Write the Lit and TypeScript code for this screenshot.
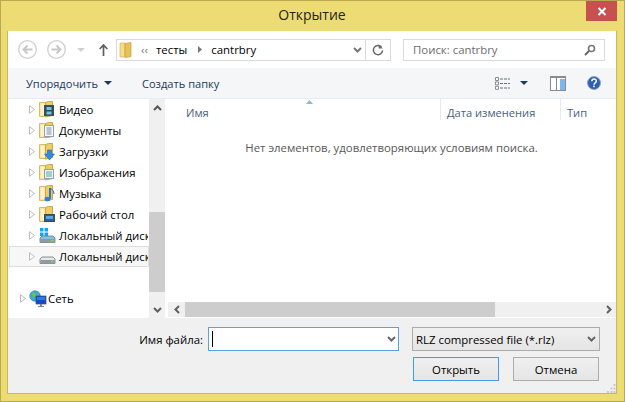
import { LitElement, html, css, svg } from "lit";
import { customElement } from "lit/decorators.js";

const folderBase = svg`
  <path d="M.5 1.500h6v14h-6z" fill="#f9e6a6" stroke="#d8bb6c"/>
  <path d="M6.500 1.500l3-1h4v14l-7 1.500z" fill="#efcc68" stroke="#c9a650"/>
  <path d="M2 3h3.500v11H2z" fill="#fdf2c8"/>`;

const overlays: Record<string, unknown> = {
  video: svg`<rect x="5.500" y="4.500" width="9" height="10" fill="#2e4a60" stroke="#3c4f60"/><path d="M7.500 6h5v3h-5zM7.500 10.500h5v3h-5z" fill="#7cc0e0"/>`,
  docs: svg`<rect x="5.500" y="3.500" width="9" height="11" fill="#f7f9fb" stroke="#8fa0b0"/><path d="M7.500 6h5M7.500 8h5M7.500 10h5M7.500 12h5" stroke="#7b8fa5"/>`,
  down: svg`<path d="M8.500 7h4v4h3l-5 6-5-6h3z" fill="#2f8be0" stroke="#1c65b5" stroke-width=".6"/>`,
  pics: svg`<rect x="5.500" y="5.500" width="9" height="9" fill="#eef3f6" stroke="#8fa0b0"/><rect x="7" y="7" width="6" height="6" fill="#a5cfc0"/>`,
  music: svg`<path d="M11 3v11" stroke="#1e6fc0" stroke-width="1.800"/><path d="M11 3c2 1 4 3 4 6" stroke="#1e6fc0" fill="none"/><ellipse cx="8.500" cy="14" rx="3" ry="2.200" fill="#2a83d6"/>`,
  desk: svg`<rect x="5.500" y="8.500" width="10" height="7" fill="#2b5d8e" stroke="#3a4a5a"/><path d="M7 10h7v3H7z" fill="#58a7e0"/>`,
};

const folder = (k: string) => html`<svg class="ico" width="17" height="17" viewBox="0 0 17 17">${folderBase}${overlays[k]}</svg>`;

const drive = (win: boolean) => html`<svg class="ico" width="17" height="17" viewBox="0 0 17 17">
  ${win ? svg`<path d="M1 1h3.500v3.500H1zM5.500 1H9v3.500H5.500zM1 5.500h3.500V9H1zM5.500 5.500H9V9H5.500z" fill="#12a5ee"/>` : ""}
  <path d="M1 11l2-2h11l2 2v4.500H1z" fill="${win ? "#7fc4e6" : "#e6e8ea"}" stroke="#6e7680" stroke-width=".8"/>
  <rect x="1.400" y="12" width="14.400" height="3.400" fill="#8f9aa3"/>
  <rect x="12" y="13" width="2.500" height="1.400" fill="#7ee03f"/></svg>`;

const net = html`<svg class="ico" width="18" height="18" viewBox="0 0 18 18">
  <circle cx="6" cy="6" r="5.300" fill="#3fa8d8" stroke="#2c7a9c" stroke-width=".6"/>
  <path d="M3 3c2-1 3 0 4 1s-1 3-2 3-2-2-2-4zM7 8c1 0 2 1 1.500 2.500L7 11z" fill="#6cc24a"/>
  <rect x="7" y="6" width="10" height="8" fill="#1649c8" stroke="#44505c" stroke-width=".7"/>
  <rect x="8" y="7" width="8" height="3" fill="#2f78ea"/>
  <path d="M11 14h2v2h2v1H9v-1h2z" fill="#7a8794"/></svg>`;

const tri = html`<svg class="tri" width="6" height="9" viewBox="0 0 6 9"><path d="M.5.7l5 3.800-5 3.800z" fill="#fff" stroke="#bdbdbd"/></svg>`;

const chevDown = (c = "#666") => html`<svg width="9" height="6" viewBox="0 0 9 6"><path d="M1 1l3.500 3.500L8 1" fill="none" stroke="${c}" stroke-width="2"/></svg>`;
const caret = (c = "#1e395b") => html`<svg width="8" height="4" viewBox="0 0 8 4"><path d="M0 0h8L4 4z" fill="${c}"/></svg>`;

const circleArrow = (flip: boolean) => html`<svg width="19" height="19" viewBox="0 0 19 19">
  <circle cx="9.500" cy="9.500" r="8.800" fill="#fff" stroke="#d0d0d0" stroke-width="1.300"/>
  <path d="${flip ? "M4.500 9.500h9M9.500 5.500l4 4-4 4" : "M14.500 9.500h-9M9.500 5.500l-4 4 4 4"}" fill="none" stroke="#c8c8c8" stroke-width="2"/></svg>`;

interface Row { t: string; i: unknown; sel?: boolean }
const rows: Row[] = [
  { t: "Видео", i: folder("video") },
  { t: "Документы", i: folder("docs") },
  { t: "Загрузки", i: folder("down") },
  { t: "Изображения", i: folder("pics") },
  { t: "Музыка", i: folder("music") },
  { t: "Рабочий стол", i: folder("desk") },
  { t: "Локальный диск", i: drive(true) },
  { t: "Локальный диск", i: drive(false), sel: true },
];

@customElement("app-root")
export class AppRoot extends LitElement {
  static styles = css`
    :host { display: block; width: 625px; height: 402px; overflow: hidden; font-family: "Open Sans", "Noto Sans", sans-serif; font-size: 11.4px; color: #000; }
    * { box-sizing: border-box; }
    .win { width: 625px; height: 402px; border: 1px solid #b9a94f; background: #eddc74; padding: 0 7px 7px 6px; display: flex; flex-direction: column; }
    .title { height: 30px; flex: none; display: grid; grid-template-columns: 1fr auto 1fr; align-items: start; }
    .title h1 { margin: 0; font-weight: 400; font-size: 14px; line-height: 22px; padding-top: 3px; color: #222; grid-column: 2; }
    .close { justify-self: end; width: 31px; height: 20px; background: #c75050; display: flex; align-items: center; justify-content: center; }
    .inner { flex: 1; display: flex; flex-direction: column; background: #f0f0f0; border: 1px solid #c9b95c; border-width: 0 1px 1px 1px; min-height: 0; }
    .nav { height: 37px; flex: none; background: #fff; display: flex; align-items: center; padding-left: 10px; }
    .nav .fwd { margin-left: 10px; display: flex; }
    .nav .hist { margin-left: 11px; display: flex; }
    .nav .up { margin-left: 14px; }
    .addr { margin-left: 8px; width: 275px; height: 22px; border: 1px solid #d9d9d9; display: flex; align-items: center; }
    .addr .f { margin-left: 2px; flex: none; }
    .addr .lq { margin-left: 9px; color: #777; width: 15px; }
    .addr .sep { margin: 0 9px 0 11px; flex: none; }
    .addr .dd { margin-left: auto; display: flex; margin-right: 3px; }
    .addr .ref { width: 25px; height: 20px; border-left: 1px solid #d9d9d9; display: flex; align-items: center; justify-content: center; }
    .search { margin-left: 12px; width: 202px; height: 22px; border: 1px solid #d9d9d9; display: flex; align-items: center; padding: 0 8px 0 9px; color: #6d6d6d; justify-content: space-between; }
    .tools { height: 31px; flex: none; background: #f5f6f7; border-bottom: 1px solid #e8ecf0; display: flex; align-items: center; padding-left: 18px; color: #1e395b; font-size: 11.1px; }
    .tools .org { display: flex; align-items: center; gap: 6px; }
    .tools .new { margin-left: 30px; }
    .tools .right { margin-left: auto; display: flex; align-items: center; }
    .tools .views { display: flex; align-items: center; gap: 10px; margin-right: 22px; }
    .tools .pane { margin-right: 21px; }
    .tools .help { margin-right: 15px; display: flex; }
    .body { height: 219px; flex: none; display: grid; grid-template-columns: 141px 16px 1fr; background: #fff; }
    .tree { overflow: hidden; min-width: 0; display: flex; flex-direction: column; }
    .row { height: 21px; flex: none; display: flex; align-items: center; padding-left: 20px; white-space: nowrap; overflow: hidden; border: 1px solid transparent; color: #000; }
    .row.sel { background: #f7f7f7; border-color: #dedede; margin-left: 1px; padding-left: 19px; }
    .row .tri { flex: none; }
    .row .ico { flex: none; margin-left: 4px; margin-right: 3px; }
    .row.net { margin-top: 21px; padding-left: 11px; }
    .row.net .ico { margin-left: 3px; margin-right: 1px; }
    .vbar { background: #f0f0f0; display: flex; flex-direction: column; }
    .vbar .btn { height: 16px; flex: none; display: flex; align-items: center; justify-content: center; }
    .vbar .top { height: 113px; }
    .vbar .thumb { height: 80px; flex: none; background: #cdcdcd; }
    .vbar .rest { flex: 1; }
    .vbar .up { height: 18px; }
    .main { display: flex; flex-direction: column; min-width: 0; }
    .cols { height: 21px; flex: none; display: grid; grid-template-columns: 275px 120px 1fr; color: #4c607a; font-size: 11.1px; }
    .col { display: flex; align-items: center; padding: 6px 0 0 6px; position: relative; border-left: 1px solid #e5e8ec; }
    .col:first-child { border-left: 0; padding-left: 21px; }
    .col .sort { position: absolute; left: 141px; top: 1px; }
    .empty { flex: 1; text-align: center; padding: 19px 0 0 2px; color: #575757; line-height: 17px; }
    .hbar { height: 15px; flex: none; margin: 0 0 1px 3px; background: #f0f0f0; display: flex; align-items: center; }
    .hbar .btn { width: 17px; height: 15px; flex: none; display: flex; align-items: center; justify-content: center; }
    .hbar .btn.r { padding-left: 2px; }
    .hbar .thumb { width: 310px; height: 15px; background: #cdcdcd; flex: none; }
    .hbar .rest { flex: 1; }
    .foot { flex: 1; position: relative; display: grid; grid-template-columns: 200px 191px 201px; grid-template-rows: 24px 24px; row-gap: 6px; padding-top: 9px; align-content: start; }
    .foot label { justify-self: end; align-self: center; margin-right: 5px; }
    .input { border: 1px solid #5b9fe6; background: #fff; display: flex; align-items: center; justify-content: space-between; padding: 0 2px 0 3px; }
    .cursor { width: 1px; height: 16px; background: #000; }
    .select { margin-left: 13px; border: 1px solid #acacac; background: linear-gradient(#f0f0f0, #e5e5e5); display: flex; align-items: center; justify-content: space-between; padding: 0 3px 0 3px; white-space: nowrap; }
    .btns { grid-column: 3; margin-left: 13px; display: flex; justify-content: space-between; padding: 0 1px; }
    .b { width: 86px; height: 24px; display: flex; align-items: center; justify-content: center; border: 1px solid #acacac; background: linear-gradient(#f0f0f0, #e5e5e5); }
    .b.def { border-color: #3c9cee; }
    .grip { position: absolute; right: 0; bottom: 0; }
  `;

  render() {
    return html`<div class="win">
      <div class="title"><h1>Открытие</h1>
        <div class="close"><svg width="10" height="9" viewBox="0 0 10 9"><path d="M1.500 1l7 7M8.500 1l-7 7" stroke="#fff" stroke-width="2"/></svg></div>
      </div>
      <div class="inner">
        <div class="nav">
          ${circleArrow(false)}<span class="fwd">${circleArrow(true)}</span>
          <span class="hist">${caret("#d0d0d0")}</span>
          <svg class="up" width="9" height="12" viewBox="0 0 9 12"><path d="M4.500 12V1M.7 5l3.800-4 3.800 4" fill="none" stroke="#5e5e5e" stroke-width="1.700"/></svg>
          <div class="addr">
            <svg class="f" width="13" height="16" viewBox="0 0 13 16"><path d="M1 1h5v14H1z" fill="#f6dc82" stroke="#d3b45f" stroke-width=".7"/><path d="M6 1.500L12 .5v14l-6 1z" fill="#e9c155" stroke="#c49b3f" stroke-width=".7"/></svg>
            <span class="lq">‹‹</span><span>тесты</span>
            <svg class="sep" width="4" height="7" viewBox="0 0 4 7"><path d="M0 0l4 3.500L0 7z" fill="#777"/></svg>
            <span>cantrbry</span>
            <span class="dd">${chevDown("#777")}</span>
            <span class="ref"><svg width="12" height="12" viewBox="0 0 12 12"><path d="M9.600 3.200A4.600 4.600 0 1 0 10.600 6.400" fill="none" stroke="#6a6a6a" stroke-width="1.500"/><path d="M6.600 .2v4.400h4.200z" fill="#6a6a6a"/></svg></span>
          </div>
          <div class="search"><span>Поиск: cantrbry</span>
            <svg width="12" height="12" viewBox="0 0 12 12"><circle cx="7.500" cy="4.500" r="3" fill="none" stroke="#777" stroke-width="1.600"/><path d="M5 7l-4 4" stroke="#666" stroke-width="2"/></svg>
          </div>
        </div>
        <div class="tools">
          <span class="org">Упорядочить ${caret()}</span>
          <span class="new">Создать папку</span>
          <div class="right">
            <span class="views">
              <svg width="15" height="13" viewBox="0 0 15 13"><path d="M.5.5h3v3h-3zM.5 4.900h3v3h-3zM.5 9.300h3v3h-3z" fill="#fff" stroke="#8a8a8a"/><path d="M5 2h10M5 6.500h10M5 11h10" stroke="#62707f" stroke-dasharray="3 1"/></svg>
              ${caret()}
            </span>
            <svg class="pane" width="16" height="15" viewBox="0 0 16 15"><rect x=".5" y=".5" width="15" height="14" fill="#fff" stroke="#8a8a8a"/><path d="M1 1.500h14" stroke="#8a8a8a"/><path d="M6.500 2v12" stroke="#8a8a8a"/><rect x="10" y="3" width="5" height="11" fill="#7cb8ee"/></svg>
            <span class="help"><svg width="14" height="14" viewBox="0 0 14 14"><circle cx="7" cy="7" r="6.500" fill="#2a5fb5" stroke="#9aa5b5"/><path d="M4.800 5.300c0-3 4.600-3 4.600-.2 0 1.800-2.400 1.800-2.400 3.600" fill="none" stroke="#fff" stroke-width="1.500"/><rect x="6.200" y="9.600" width="1.600" height="1.600" fill="#fff"/></svg></span>
          </div>
        </div>
        <div class="body">
          <div class="tree">
            ${rows.map((r) => html`<div class="row ${r.sel ? "sel" : ""}">${tri}${r.i}<span>${r.t}</span></div>`)}
            <div class="row net">${tri}${net}<span>Сеть</span></div>
          </div>
          <div class="vbar">
            <div class="top"><div class="btn up"><svg width="9" height="6" viewBox="0 0 9 6"><path d="M1 5l3.500-3.500L8 5" fill="none" stroke="#555" stroke-width="2"/></svg></div></div>
            <div class="thumb"></div>
            <div class="rest"></div>
            <div class="btn">${chevDown("#606060")}</div>
          </div>
          <div class="main">
            <div class="cols">
              <div class="col">Имя<svg class="sort" width="7" height="4" viewBox="0 0 7 4"><path d="M0 4l3.500-4 3.500 4z" fill="#8fb8d8"/></svg></div>
              <div class="col">Дата изменения</div>
              <div class="col">Тип</div>
            </div>
            <div class="empty">Нет элементов, удовлетворяющих условиям поиска.</div>
            <div class="hbar">
              <div class="btn"><svg width="6" height="9" viewBox="0 0 6 9"><path d="M5 1L1.500 4.500 5 8" fill="none" stroke="#606060" stroke-width="2"/></svg></div>
              <div class="thumb"></div>
              <div class="rest"></div>
              <div class="btn r"><svg width="6" height="9" viewBox="0 0 6 9"><path d="M1 1l3.500 3.500L1 8" fill="none" stroke="#606060" stroke-width="2"/></svg></div>
            </div>
          </div>
        </div>
        <div class="foot">
          <label>Имя файла:</label>
          <div class="input"><span class="cursor"></span>${chevDown("#666")}</div>
          <div class="select"><span>RLZ compressed file (*.rlz)</span>${chevDown("#666")}</div>
          <div class="btns"><div class="b def">Открыть</div><div class="b">Отмена</div></div>
          <svg class="grip" width="9" height="9" viewBox="0 0 9 9"><path d="M6.500 0h2v2h-2zM3.500 3.500h2v2h-2zM6.500 3.500h2v2h-2zM0 7h2v2H0zM3.500 7h2v2h-2zM6.500 7h2v2h-2z" fill="#c9c9c9"/></svg>
        </div>
      </div>
    </div>`;
  }
}
